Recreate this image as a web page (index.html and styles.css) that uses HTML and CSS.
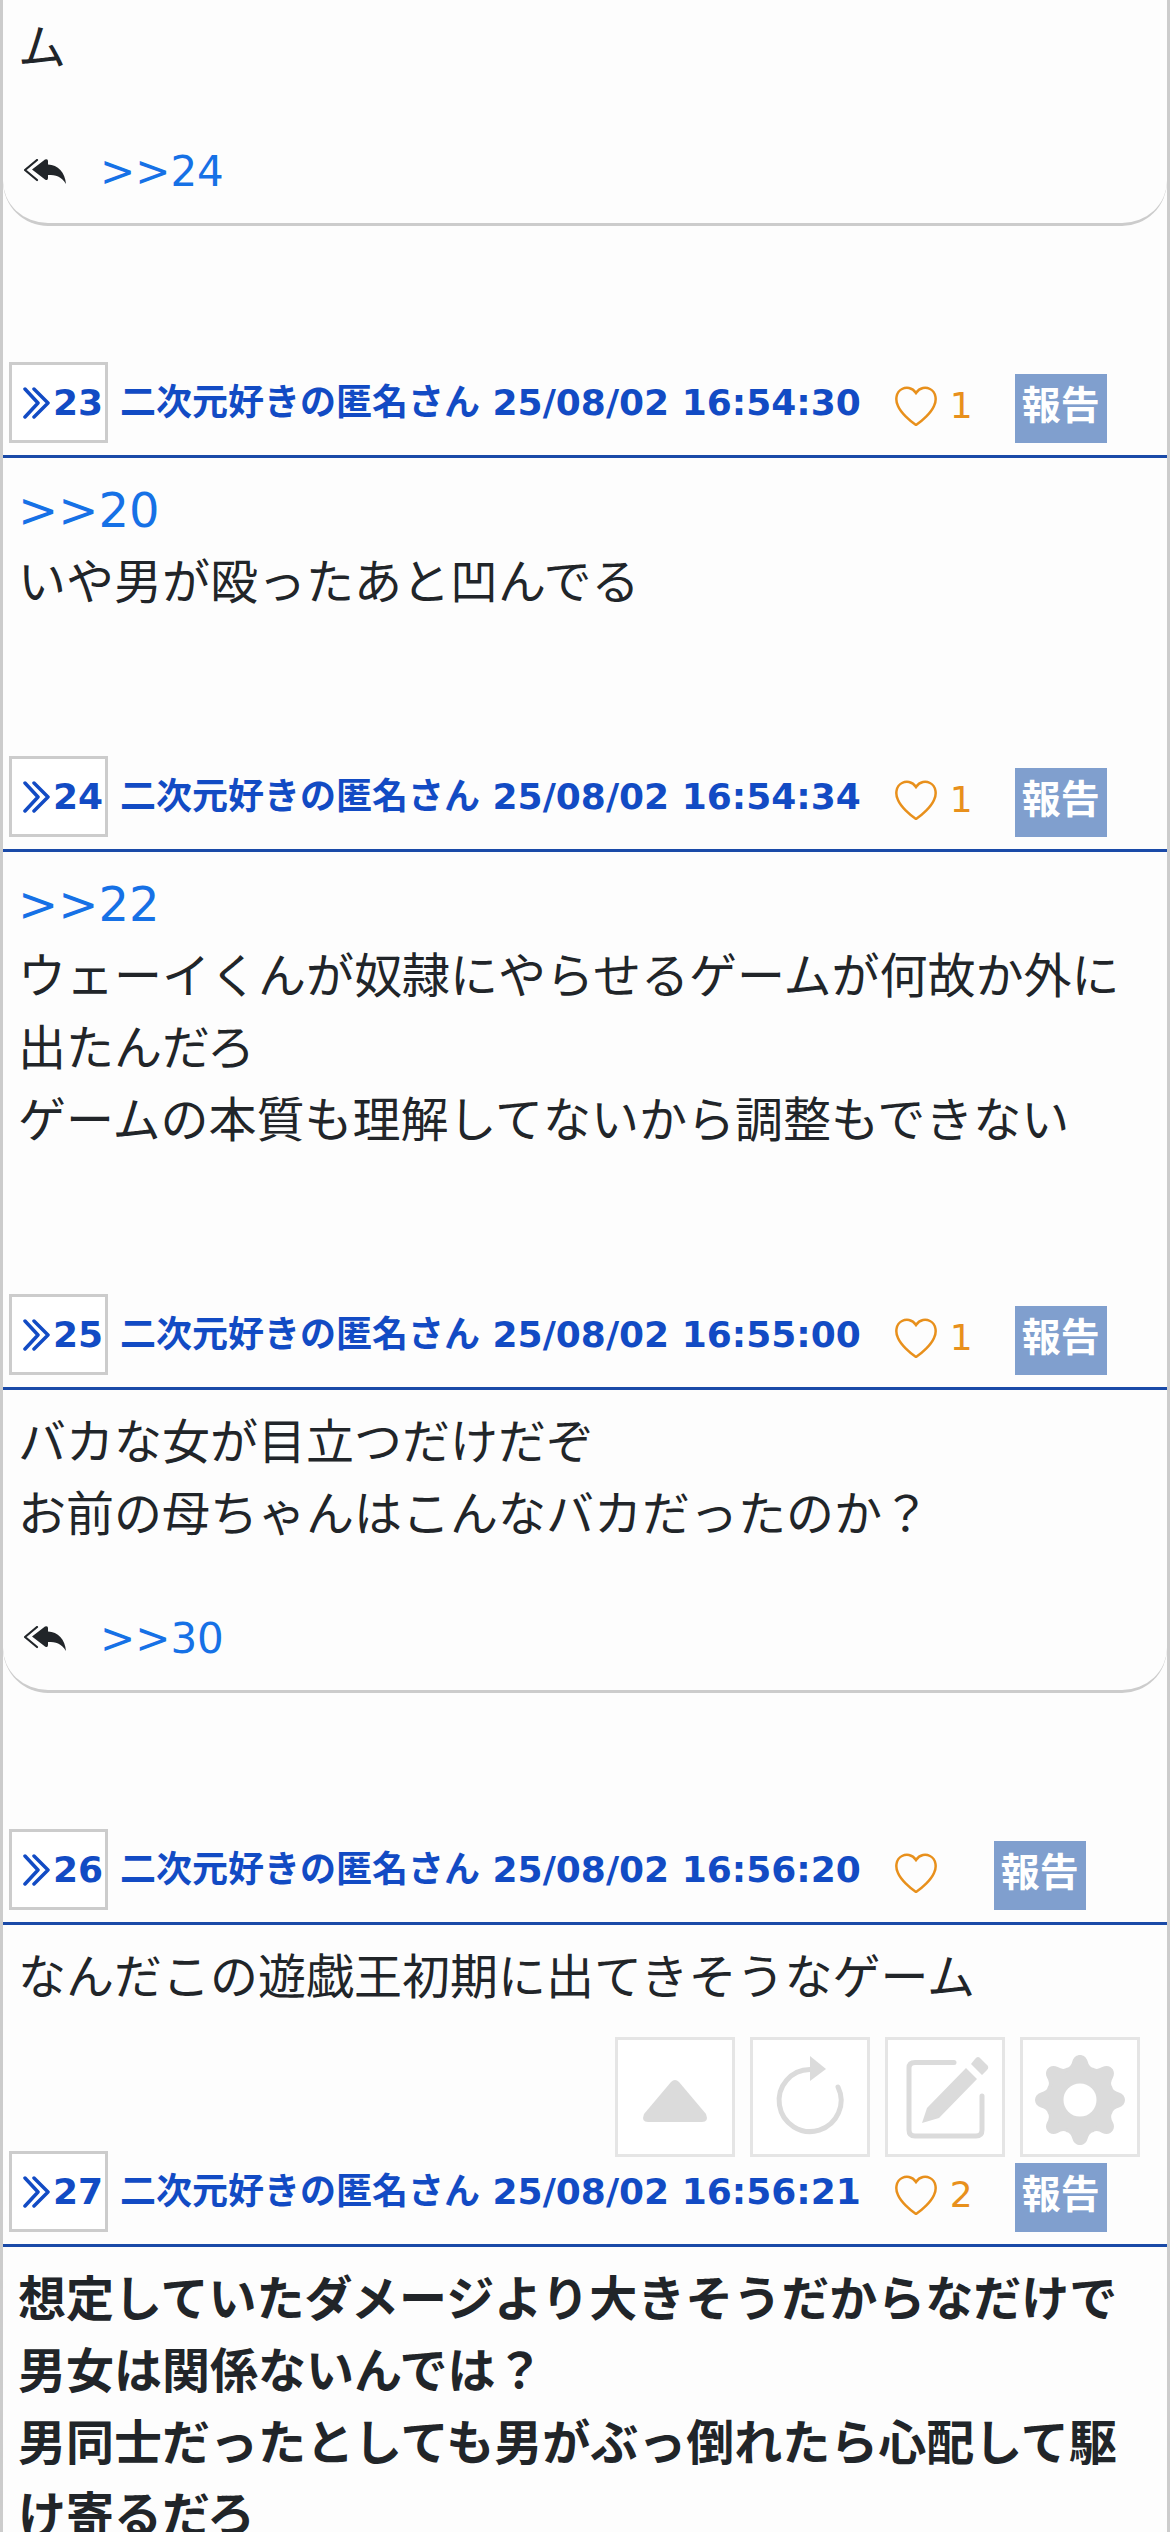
FILE: index.html
```
<!DOCTYPE html>
<html lang="ja">
<head>
<meta charset="utf-8">
<meta name="viewport" content="width=device-width">
<title>スレッド</title>
<link rel="stylesheet" href="styles.css">
</head>
<body>
<svg class="sprite" aria-hidden="true">
  <symbol id="i-chev" viewBox="0 0 28 32"><path d="M2 2 15 16 2 30M11 2 25 16 11 30" fill="none" stroke="currentColor" stroke-width="3.500" stroke-linecap="round" stroke-linejoin="round"/></symbol>
  <symbol id="i-heart" viewBox="0 0 42 40"><path d="M21 7C17 1 11 1 7 3C1 6 0 14 3 20C6 27 15 35 21 39C27 35 36 27 39 20C42 14 41 6 35 3C31 1 25 1 21 7Z" fill="none" stroke="currentColor" stroke-width="2.5"/></symbol>
  <symbol id="i-reply" viewBox="0 0 42 25"><path d="M13 1 1 11 13 21" fill="none" stroke="currentColor" stroke-width="2.2" stroke-linecap="round" stroke-linejoin="round"/><path d="M8 10.500 21 .5Q24-.5 24 2V5.500C34 6 41 13 42 25C37 17 32 16 24 16V19Q24 22 21 20.500Z" fill="currentColor"/></symbol>
</svg>
<main class="thread">
  <article class="post">
    <p class="body">ム</p>
    <div class="replies"><svg class="reply-icon"><use href="#i-reply"/></svg><a href="#r24">&gt;&gt;24</a></div>
  </article>

  <article class="post" id="r23">
    <header class="head">
      <button class="num" type="button"><svg class="chev"><use href="#i-chev"/></svg>23</button>
      <span class="meta">二次元好きの匿名さん 25/08/02 16:54:30</span>
      <button class="like" type="button" aria-label="いいね"><svg class="heart"><use href="#i-heart"/></svg><span>1</span></button>
      <button class="report" type="button">報告</button>
    </header>
    <p class="body"><a href="#r20">&gt;&gt;20</a><br>いや男が殴ったあと凹んでる</p>
  </article>

  <article class="post" id="r24">
    <header class="head">
      <button class="num" type="button"><svg class="chev"><use href="#i-chev"/></svg>24</button>
      <span class="meta">二次元好きの匿名さん 25/08/02 16:54:34</span>
      <button class="like" type="button" aria-label="いいね"><svg class="heart"><use href="#i-heart"/></svg><span>1</span></button>
      <button class="report" type="button">報告</button>
    </header>
    <p class="body"><a href="#r22">&gt;&gt;22</a><br>ウェーイくんが奴隷にやらせるゲームが何故か外に出たんだろ<br>ゲームの本質も理解してないから調整もできない</p>
  </article>

  <article class="post" id="r25">
    <header class="head">
      <button class="num" type="button"><svg class="chev"><use href="#i-chev"/></svg>25</button>
      <span class="meta">二次元好きの匿名さん 25/08/02 16:55:00</span>
      <button class="like" type="button" aria-label="いいね"><svg class="heart"><use href="#i-heart"/></svg><span>1</span></button>
      <button class="report" type="button">報告</button>
    </header>
    <p class="body">バカな女が目立つだけだぞ<br>お前の母ちゃんはこんなバカだったのか？</p>
    <div class="replies"><svg class="reply-icon"><use href="#i-reply"/></svg><a href="#r30">&gt;&gt;30</a></div>
  </article>

  <article class="post" id="r26">
    <header class="head">
      <button class="num" type="button"><svg class="chev"><use href="#i-chev"/></svg>26</button>
      <span class="meta">二次元好きの匿名さん 25/08/02 16:56:20</span>
      <button class="like" type="button" aria-label="いいね"><svg class="heart"><use href="#i-heart"/></svg></button>
      <button class="report" type="button">報告</button>
    </header>
    <p class="body">なんだこの遊戯王初期に出てきそうなゲーム</p>
  </article>

  <article class="post" id="r27">
    <header class="head">
      <button class="num" type="button"><svg class="chev"><use href="#i-chev"/></svg>27</button>
      <span class="meta">二次元好きの匿名さん 25/08/02 16:56:21</span>
      <button class="like" type="button" aria-label="いいね"><svg class="heart"><use href="#i-heart"/></svg><span>2</span></button>
      <button class="report" type="button">報告</button>
    </header>
    <p class="body popular">想定していたダメージより大きそうだからなだけで男女は関係ないんでは？<br>男同士だったとしても男がぶっ倒れたら心配して駆け寄るだろ</p>
  </article>
</main>

<nav class="tools" aria-label="操作">
  <button type="button" aria-label="上へ"><svg viewBox="0 0 114 114"><path d="M26 74 53 42Q57 38 61 42L88 74Q91 82 84 82H30Q23 82 26 74Z" fill="currentColor"/></svg></button>
  <button type="button" aria-label="更新"><svg viewBox="0 0 114 114"><path d="M57 29.500A31 31 0 1 0 85 47" fill="none" stroke="currentColor" stroke-width="5" stroke-linecap="round"/><path d="M57 16V41L73 29Z" fill="currentColor"/></svg></button>
  <button type="button" aria-label="書き込む"><svg viewBox="0 0 114 114"><path d="M66 22.500H27Q21 22.500 21 28V90Q21 96 27 96H88Q94 96 94 90V56" fill="none" stroke="currentColor" stroke-width="5" stroke-linecap="round"/><path d="M34 83 39 68 78 28 89 39 51 78ZM83 24 87 19Q90 15 93 19L98 24Q102 27 99 30L94 35Z" fill="currentColor"/></svg></button>
  <button type="button" aria-label="設定"><svg viewBox="0 0 114 114"><g transform="translate(0 3)"><g fill="currentColor"><path id="tooth" d="M43.500 25Q48 24 49.500 18C52 10 62 10 64.500 18Q66 24 70.500 25L72 40H42Z"/><use href="#tooth" transform="rotate(45 57 57)"/><use href="#tooth" transform="rotate(90 57 57)"/><use href="#tooth" transform="rotate(135 57 57)"/><use href="#tooth" transform="rotate(180 57 57)"/><use href="#tooth" transform="rotate(225 57 57)"/><use href="#tooth" transform="rotate(270 57 57)"/><use href="#tooth" transform="rotate(315 57 57)"/></g><circle cx="57" cy="57" r="24" fill="none" stroke="currentColor" stroke-width="15"/></g></svg></button>
</nav>
</body>
</html>
```
FILE: styles.css
```
* {
  box-sizing: border-box;
}

body {
  margin: 0;
  background: #fdfdfd;
  color: #212529;
  font-family: "DejaVu Sans", "Noto Sans CJK JP", sans-serif;
  font-size: 48px;
  line-height: 72px;
}

.sprite {
  display: none;
}

a {
  color: #1671e6;
  text-decoration: none;
}

button {
  margin: 0;
  padding: 0;
  border: 0;
  background: none;
  font: inherit;
  color: inherit;
}

.thread {
  height: 100vh;
  overflow-y: auto;
  scrollbar-width: none;
  border: solid #ccc;
  border-width: 0 3px;
}

.body {
  margin: 0;
  padding: 16px 15px 2px;
}

.post:first-child .body {
  padding-top: 11px;
}

.popular {
  font-weight: bold;
}

.replies {
  display: flex;
  align-items: center;
  gap: 34px;
  height: 141px;
  padding: 35px 21px 0;
  border-bottom: 3px solid #ccc;
  border-radius: 0 0 45px 45px;
  font-size: 42px;
}

.reply-icon {
  width: 42px;
  height: 25px;
}

/* Post header */
.head {
  display: flex;
  align-items: flex-start;
  height: 96px;
  margin-top: 136px;
  padding-left: 6px;
  border-bottom: 3px solid #1a4aa8;
  font-size: 36px;
  line-height: 54px;
  color: #124bc4;
}

.num {
  display: flex;
  align-items: center;
  justify-content: flex-end;
  width: 99px;
  height: 81px;
  padding-right: 2px;
  border: 3px solid #ccc;
  background: #fff;
  font-weight: bold;
}

.chev {
  width: 28px;
  height: 32px;
  margin-right: 2px;
}

.meta {
  margin: 14px 34px 0 12px;
  font-weight: bold;
  white-space: nowrap;
}

.like {
  display: flex;
  align-items: center;
  gap: 13px;
  height: 54px;
  margin-top: 17px;
  min-width: 57px;
  color: #e8901c;
}

.heart {
  width: 42px;
  height: 40px;
}

.report {
  height: 69px;
  margin: 12px 0 0 42px;
  padding: 0 7px 6px;
  background: #809fce;
  color: #fff;
  font-size: 39px;
  font-weight: bold;
}

/* Floating tool buttons */
.tools {
  position: fixed;
  right: 30px;
  bottom: 375px;
  display: flex;
  gap: 15px;
}

.tools button {
  width: 120px;
  height: 120px;
  border: 3px solid #e5e5e5;
  background: #fff;
  color: #dbdbdb;
}

.tools svg {
  display: block;
  width: 100%;
  height: 100%;
}
```
